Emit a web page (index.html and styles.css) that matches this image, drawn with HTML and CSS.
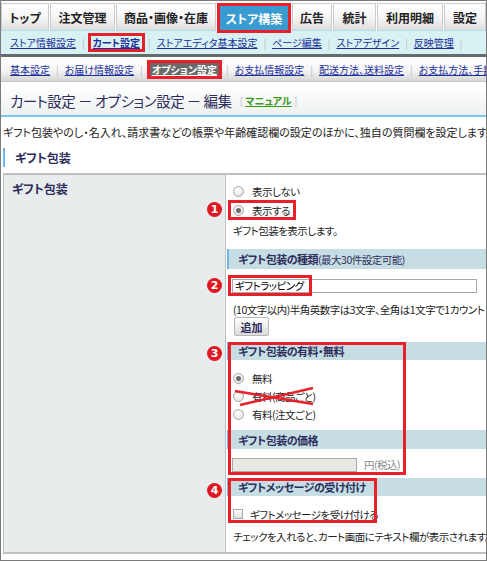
FILE: index.html
```html
<!DOCTYPE html>
<html lang="ja">
<head>
  <meta charset="UTF-8">
  <title>カート設定 - オプション設定 - 編集</title>
  <link rel="stylesheet" href="styles.css">
</head>
<body>
  <div class="frame">

    <ul class="tabs">
      <li class="t-top">トップ</li>
      <li class="t-order">注文管理</li>
      <li class="t-item">商品・画像・在庫</li>
      <li class="t-store active">ストア構築</li>
      <li class="t-ad">広告</li>
      <li class="t-stat">統計</li>
      <li class="t-bill">利用明細</li>
      <li class="t-conf">設定</li>
    </ul>

    <div class="subnav">
      <a href="#">ストア情報設定</a><span class="sep">|</span>
      <a href="#" class="current">カート設定</a><span class="sep">|</span>
      <a href="#">ストアエディタ基本設定</a><span class="sep">|</span>
      <a href="#">ページ編集</a><span class="sep">|</span>
      <a href="#">ストアデザイン</a><span class="sep">|</span>
      <a href="#">反映管理</a><span class="sep">|</span>
    </div>

    <div class="subnav2">
      <a href="#">基本設定</a><span class="sep">|</span>
      <a href="#">お届け情報設定</a><span class="sep">|</span>
      <a href="#" class="current">オプション設定</a><span class="sep">|</span>
      <a href="#">お支払情報設定</a><span class="sep">|</span>
      <a href="#">配送方法、送料設定</a><span class="sep">|</span>
      <a href="#">お支払方法、手数料設定</a>
    </div>

    <div class="title-bar">
      <h1>カート設定 － オプション設定 － 編集</h1>
      <span class="manual">[ <a href="#">マニュアル</a> ]</span>
    </div>

    <p class="lead">ギフト包装やのし・名入れ、請求書などの帳票や年齢確認欄の設定のほかに、独自の質問欄を設定します。</p>

    <h2 class="section-head">ギフト包装</h2>

    <div class="form-table">
      <div class="label-cell">ギフト包装</div>
      <div class="value-cell">

        <div class="opt first"><span class="radio"></span>表示しない</div>
        <div class="opt boxed">
          <span class="badge">1</span>
          <span class="mark-inline"><span class="radio on"></span>表示する</span>
        </div>
        <p class="desc">ギフト包装を表示します。</p>

        <div class="bar bar-kind"><b>ギフト包装の種類</b>(最大30件設定可能)</div>
        <div class="input-row">
          <span class="badge">2</span>
          <input type="text" class="name-input" value="ギフトラッピング">
          <span class="mark mark-name"></span>
        </div>
        <p class="note">(10文字以内)半角英数字は3文字、全角は1文字で1カウント</p>
        <button class="add-btn">追加</button>

        <div class="group group-fee">
          <span class="badge">3</span>
          <div class="bar"><b>ギフト包装の有料・無料</b></div>
          <div class="opt fee-first"><span class="radio on"></span>無料</div>
          <div class="opt struck">
            <span class="radio"></span>有料(商品ごと)
            <svg class="cross" width="90" height="20" viewBox="0 0 90 20">
              <path d="M6 4 L84 17" stroke="#e8202a" stroke-width="2.5" fill="none"/>
              <path d="M11 18 L84 1" stroke="#e8202a" stroke-width="2.5" fill="none"/>
            </svg>
          </div>
          <div class="opt"><span class="radio"></span>有料(注文ごと)</div>
          <div class="bar bar-price"><b>ギフト包装の価格</b></div>
          <div class="price-row">
            <input type="text" class="price-input" disabled>
            <span class="yen">円(税込)</span>
          </div>
          <span class="mark mark-fee"></span>
        </div>

        <div class="group group-msg">
          <span class="badge">4</span>
          <div class="bar"><b>ギフトメッセージの受け付け</b></div>
          <div class="opt check-row"><span class="check"></span>ギフトメッセージを受け付ける</div>
          <span class="mark mark-msg"></span>
        </div>

        <p class="desc last">チェックを入れると、カート画面にテキスト欄が表示されます。</p>
      </div>
    </div>

  </div>
</body>
</html>
```

FILE: styles.css
```css
body {
  margin: 0;
  font-family: "Noto Sans CJK JP", "Noto Sans", sans-serif;
  font-feature-settings: "palt";
  font-size: 11px;
  color: #222;
  background-color: #fff;
}

.frame {
  width: 487px;
  height: 561px;
  box-sizing: border-box;
  border: 1px solid #7a7a7a;
  overflow: hidden;
  position: relative;
}

/* タブ */
.tabs {
  list-style: none;
  margin: 2px 0 0;
  padding: 0;
  display: flex;
  gap: 1px;
  height: 28px;
}

.tabs li {
  box-sizing: border-box;
  height: 28px;
  border: 1px solid #c9cccc;
  border-bottom-color: #a9dfe8;
  background: linear-gradient(#ffffff, #f4f4f4 55%, #dedede);
  font-weight: bold;
  font-size: 12px;
  color: #222;
  display: flex;
  align-items: center;
  justify-content: center;
  white-space: nowrap;
  flex-shrink: 0;
}

.tabs .t-top { width: 48px; }
.tabs .t-order { width: 65px; }
.tabs .t-item { width: 100px; }
.tabs .t-store { width: 74px; }
.tabs .t-ad { width: 40px; }
.tabs .t-stat { width: 43px; }
.tabs .t-bill { width: 66px; }
.tabs .t-conf { width: 42px; }

.tabs li.active {
  height: 30px;
  background: #3a9bd0;
  color: #fff;
  border: 3px solid #e8202a;
  position: relative;
  z-index: 1;
}

/* サブナビ */
.subnav, .subnav2 {
  display: flex;
  align-items: center;
  white-space: nowrap;
  padding-left: 9px;
  font-size: 10px;
}

.subnav {
  height: 23px;
  background-color: #d8f2f3;
  border-bottom: 3px solid #616d6d;
}

.subnav2 {
  height: 24px;
  background: linear-gradient(#ffffff, #f5f5f5 55%, #d6d6d6);
  border-bottom: 1px solid #c4c4c4;
}

.subnav a, .subnav2 a {
  color: #1a2f9c;
  text-decoration: underline;
}

.sep {
  color: #b8bcbc;
  margin: 0 6px;
}

.subnav a.current {
  border: 3px solid #e8202a;
  padding: 0 2px;
  margin: 0 -3px;
  font-weight: bold;
  line-height: 13px;
}

.subnav2 a.current {
  border: 3px solid #e8202a;
  background: #6a6a6a;
  color: #fff;
  font-weight: bold;
  padding: 0 2px;
  margin: 0 -2px;
  line-height: 13px;
}

/* タイトル */
.title-bar {
  margin-top: 3px;
  height: 30px;
  background: linear-gradient(#ffffff, #eef1f1);
  border-bottom: 2px solid #7cc3ee;
  display: flex;
  align-items: center;
  padding-left: 9px;
}

.title-bar h1 {
  margin: 0;
  font-size: 14.5px;
  letter-spacing: -0.5px;
  font-weight: normal;
  color: #2e2e5c;
}

.manual {
  margin-left: 8px;
  color: #c0c0c0;
  font-size: 10px;
}

.manual a {
  color: #3a9a1a;
  font-weight: bold;
}

.lead {
  margin: 7px 0 0 2px;
  line-height: 16px;
  white-space: nowrap;
  color: #222;
}

.section-head {
  margin: 8px 0 0 2px;
  height: 19px;
  line-height: 19px;
  border-left: 2px solid #6db7ea;
  padding-left: 10px;
  font-size: 12px;
  color: #2e2e5c;
}

/* フォーム */
.form-table {
  margin: 6px 0 0 2px;
  display: flex;
  border-top: 2px solid #bcc2c2;
  border-bottom: 2px solid #bcc2c2;
  border-left: 1px solid #bcc2c2;
}

.label-cell {
  width: 208px;
  flex-shrink: 0;
  background-color: #e8eced;
  padding: 5px 5px 0 8px;
  font-weight: bold;
  font-size: 12px;
  color: #2e2e5c;
  border-right: 1px solid #bcc2c2;
}

.value-cell {
  flex: 1;
  padding: 7px 0 7px 1px;
  position: relative;
  font-size: 10.5px;
  letter-spacing: -0.5px;
}

.opt {
  height: 18px;
  display: flex;
  align-items: center;
  padding-left: 6px;
  position: relative;
  white-space: nowrap;
}

.opt.boxed {
  margin-top: 1px;
  padding-left: 1px;
}

.mark-inline {
  display: flex;
  align-items: center;
  border: 3px solid #e8202a;
  height: 14px;
  padding: 0 3px 0 2px;
}

.radio {
  width: 9px;
  height: 9px;
  border-radius: 50%;
  border: 1px solid #a9a9a9;
  background: radial-gradient(circle at 40% 35%, #fff, #dcdcdc);
  margin-right: 8px;
  position: relative;
  flex-shrink: 0;
}

.radio.on::after {
  content: "";
  position: absolute;
  left: 2px;
  top: 2px;
  width: 5px;
  height: 5px;
  border-radius: 50%;
  background: #6a6a6a;
}

.check {
  width: 8px;
  height: 8px;
  border: 1px solid #a9a9a9;
  background: linear-gradient(#fff, #dcdcdc);
  margin-right: 7px;
  flex-shrink: 0;
}

.desc {
  margin: 4px 0 0;
  padding-left: 6px;
  line-height: 16px;
  white-space: nowrap;
}

.desc.last {
  margin-top: 6px;
}

.bar {
  background-color: #c6dde3;
  border-left: 2px solid #72b6e6;
  padding-left: 9px;
  height: 18px;
  display: flex;
  align-items: center;
  color: #2e2e5c;
  white-space: nowrap;
}

.bar b {
  font-size: 11px;
}

.bar-kind {
  margin-top: 10px;
  height: 20px;
}

.input-row {
  margin-top: 6px;
  height: 21px;
  display: flex;
  align-items: center;
  padding-left: 5px;
  position: relative;
}

.name-input {
  width: 245px;
  height: 14px;
  box-sizing: border-box;
  border: 1px solid #a9a9a9;
  padding: 0 2px;
  font: inherit;
  letter-spacing: -0.5px;
  color: #000;
}

.note {
  margin: 7px 0 0;
  padding-left: 6px;
  line-height: 14px;
  white-space: nowrap;
}

.add-btn {
  margin-left: 7px;
  width: 35px;
  height: 19px;
  border: 1px solid #b7b7b7;
  border-radius: 2px;
  background: linear-gradient(#ffffff, #dcdcdc);
  font-family: inherit;
  font-weight: bold;
  font-size: 11px;
  color: #2e2e5c;
  padding: 0;
  display: block;
}

.group {
  position: relative;
}

.group-fee {
  margin-top: 6px;
}

.fee-first {
  margin-top: 9px;
}

.bar-price {
  margin-top: 7px;
  height: 19px;
}

.price-row {
  margin-top: 6px;
  height: 19px;
  display: flex;
  align-items: center;
  padding-left: 5px;
}

.price-input {
  width: 125px;
  height: 14px;
  box-sizing: border-box;
  border: 1px solid #a9a9a9;
  background-color: #e9e9e3;
}

.yen {
  margin-left: 7px;
  color: #888;
}

.group-msg {
  margin-top: 4px;
}

.check-row {
  margin-top: 9px;
}

/* 注釈 */
.mark {
  position: absolute;
  border: 3px solid #e8202a;
  box-sizing: border-box;
  pointer-events: none;
}

.mark-name {
  left: 1px;
  top: 0;
  width: 84px;
  height: 21px;
}

.mark-fee {
  left: 1px;
  top: 0;
  width: 178px;
  height: 133px;
}

.mark-msg {
  left: 1px;
  top: 0;
  width: 149px;
  height: 45px;
}

.badge {
  position: absolute;
  left: -20px;
  width: 15px;
  height: 15px;
  border-radius: 50%;
  background-color: #e01822;
  color: #fff;
  font-family: "DejaVu Sans", sans-serif;
  font-weight: bold;
  font-size: 11px;
  letter-spacing: 0;
  line-height: 15px;
  text-align: center;
}

.opt .badge { top: 1px; }
.input-row .badge { top: 3px; }
.group-fee .badge { top: 4px; }
.group-msg .badge { top: 5px; }

.cross {
  position: absolute;
  left: 2px;
  top: 0;
}
```
